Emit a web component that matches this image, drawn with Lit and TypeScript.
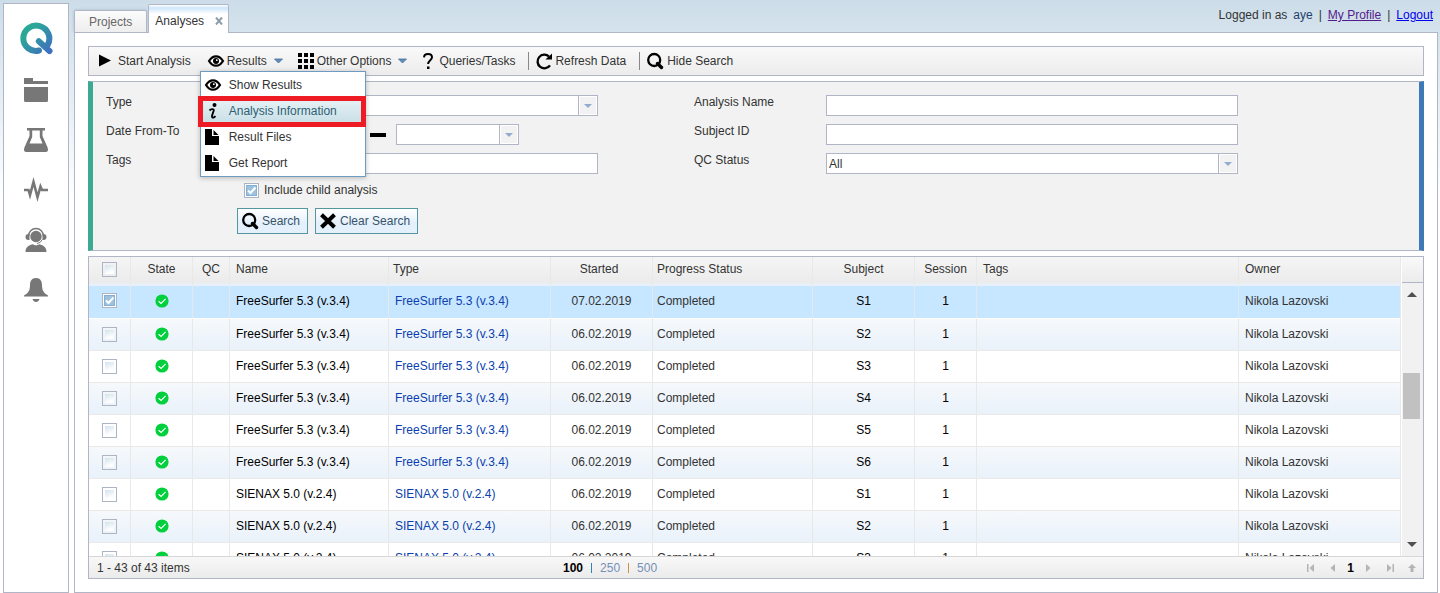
import { LitElement, html, svg, css } from "lit";
import { customElement, state } from "lit/decorators.js";
import { classMap } from "lit/directives/class-map.js";

const icon = (size: number, body: unknown, cls = "") =>
  html`<svg class="icon ${cls}" width=${size} height=${size} viewBox="0 0 ${size} ${size}" aria-hidden="true">${body}</svg>`;

const play = icon(16, svg`<path d="M1 1.500L13 7.500L1 13.500Z"/>`);
const eye = icon(
  16,
  svg`<path d="M1 8C3 4.800 5.300 3.300 8 3.300S13 4.800 15 8C13 11.200 10.700 12.700 8 12.700S3 11.200 1 8Z" fill="#fff" stroke="#000" stroke-width="2.200"/><circle cx="8" cy="8" r="3"/><circle cx="8.800" cy="7.200" r=".9" fill="#fff"/>`
);
const grid = icon(
  16,
  svg`<path d="M0 0h4v4H0zM6 0h4v4H6zM12 0h4v4h-4zM0 6h4v4H0zM6 6h4v4H6zM12 6h4v4h-4zM0 12h4v4H0zM6 12h4v4H6zM12 12h4v4h-4z"/>`
);
const question = icon(
  16,
  svg`<path d="M4 4.300C4.200 2.200 5.800 1 8 1C10.400 1 12 2.200 12 4.300C12 7.200 8.300 7.300 8.100 11" fill="none" stroke="#000" stroke-width="2"/><path d="M7 13.500h2.500v2.500H7z"/>`
);
const refresh = icon(
  16,
  svg`<path d="M13 3.500A6.800 6.800 0 1 0 14 12.300" fill="none" stroke="#000" stroke-width="2.300"/><path d="M16 .5V6.500H9.500L11.500 4.500L14 2.500Z"/>`
);
const search = icon(
  16,
  svg`<circle cx="7.200" cy="7" r="6" fill="none" stroke="#000" stroke-width="2.300"/><path d="M10.500 10.500L14.500 14.500" stroke="#000" stroke-width="3.400" stroke-linecap="round"/>`
);
const cross = icon(16, svg`<path d="M1.500 1.800L14.500 14.200M14.500 1.800L1.500 14.200" stroke="#000" stroke-width="4"/>`);
const info = icon(
  16,
  svg`<circle cx="9.500" cy="2" r="2"/><path d="M4.500 7.500C6 6 8.500 5.500 8.800 7C9 8.500 6.500 12 7 13.800C7.300 15.300 9.500 14.600 10.300 13" fill="none" stroke="#000" stroke-width="1.900"/>`
);
const file = icon(16, svg`<path d="M0 0H7V7H14V16H0Z"/><path d="M8.500 1L13.500 6H8.500Z"/>`);
const caret = html`<svg class="caret" width="11" height="6" viewBox="0 0 11 6" aria-hidden="true"><path d="M1.500 1H9.500L5.500 5Z" fill="#5b8fbd" stroke="#4c6c94" stroke-width=".8" /></svg>`;
const done = html`<svg class="done" width="14" height="14" viewBox="0 0 14 14" role="img" aria-label="Completed"><circle cx="7" cy="7" r="6.600" fill="#00d03c"/><path d="M3.600 7.200L6.100 9.500L10.600 4.800" fill="none" stroke="#fff" stroke-width="1.200"/></svg>`;

const nav = [
  { label: "Projects", body: svg`<path d="M0 0H9V3H24V6H0ZM0 9H24V22.500Q24 24 22.500 24H1.500Q0 24 0 22.500Z"/>` },
  {
    label: "Analyses",
    body: svg`<path fill-rule="evenodd" d="M3 0H21V2.500H18.500V8L23.600 19.500Q25 24 21.500 24H2.500Q-1 24 .4 19.500L5.500 8V2.500H3ZM8.200 2.500V9L5.500 15.500H18.500L15.800 9V2.500Z"/>`,
  },
  {
    label: "Activity",
    body: svg`<path d="M0 12H4.500L6 17L9.500 4L13.500 19L16.500 8.500L18 12H24" fill="none" stroke="#777" stroke-width="2.600"/>`,
  },
  {
    label: "Support",
    body: svg`<circle cx="12" cy="8.500" r="5.700"/><path d="M4.500 8A7.500 7.500 0 0 1 19.500 8" fill="none" stroke="#777" stroke-width="1.400"/><path d="M5.500 6H4.500A3 3 0 0 0 4.500 12H5.500ZM18.500 6H19.500A3 3 0 0 1 19.500 12H18.500Z"/><path d="M18.300 11.500Q17 15 13 15.500" fill="none" stroke="#777"/><path d="M1.500 24C1.500 19 4.500 17.300 8.500 16.200L12 17.500L15.500 16.200C19.500 17.300 22.500 19 22.500 24Z"/>`,
  },
  {
    label: "Notifications",
    body: svg`<path d="M12 0C7.500 0 6 3.500 6 7C6 13 4 15 0 17.500V18.500H24V17.500C20 15 18 13 18 7C18 3.500 16.500 0 12 0ZM8.500 21H15.500Q14.500 24 12 24T8.500 21Z"/>`,
  },
];

interface Analysis {
  name: string;
  started: string;
  subject: string;
}

const FS = "FreeSurfer 5.3 (v.3.4)";
const SX = "SIENAX 5.0 (v.2.4)";
const analyses: Analysis[] = [
  { name: FS, started: "07.02.2019", subject: "S1" },
  { name: FS, started: "06.02.2019", subject: "S2" },
  { name: FS, started: "06.02.2019", subject: "S3" },
  { name: FS, started: "06.02.2019", subject: "S4" },
  { name: FS, started: "06.02.2019", subject: "S5" },
  { name: FS, started: "06.02.2019", subject: "S6" },
  { name: SX, started: "06.02.2019", subject: "S1" },
  { name: SX, started: "06.02.2019", subject: "S2" },
  { name: SX, started: "06.02.2019", subject: "S3" },
];

const menu = [
  { label: "Show Results", icon: eye },
  { label: "Analysis Information", icon: info, active: true },
  { label: "Result Files", icon: file },
  { label: "Get Report", icon: file },
];

@customElement("app-root")
export class AppRoot extends LitElement {
  @state() private selected = new Set<number>([0]);

  static styles = css`
    :host {
      --line: #b1b6c6;
      display: flex;
      gap: 5px;
      box-sizing: border-box;
      height: 100vh;
      padding: 0 2px 0 3px;
      overflow: hidden;
      background: linear-gradient(#ccdde9, #ffffff 200px);
      color: #333;
      font: 12px/16px "Liberation Sans", Arial, sans-serif;
    }
    *, *::before, *::after { box-sizing: border-box; }
    button, input, select { font: inherit; color: inherit; margin: 0; }
    button { cursor: pointer; }
    .icon, .caret, .done { display: block; flex: none; overflow: visible; }

    .sidebar {
      flex: none;
      width: 66px;
      margin-top: 3px;
      padding-top: 18px;
      border: 1px solid var(--line);
      background: #fff;
      display: flex;
      flex-direction: column;
      align-items: center;
    }
    .logo { display: block; margin-bottom: 23px; }
    .nav { display: flex; flex-direction: column; gap: 26px; }
    .nav a { display: block; color: #777; }
    .nav svg { fill: #777; }

    .page { flex: 1; min-width: 0; display: flex; flex-direction: column; }
    .top { display: flex; justify-content: space-between; height: 32px; }
    .tabs { display: flex; gap: 1px; align-items: flex-end; }
    .tab {
      display: flex;
      align-items: center;
      height: 22px;
      padding: 0 14px;
      border: 1px solid var(--line);
      border-bottom: 0;
      border-radius: 2px 2px 0 0;
      background: linear-gradient(#fbfbfb, #eeeeee);
      color: #666;
      box-shadow: 0 0 3px rgba(80, 90, 110, 0.3);
    }
    .tab.current {
      z-index: 1;
      height: 29px;
      margin-bottom: -1px;
      padding: 4px 3px 0 6px;
      gap: 11px;
      background: linear-gradient(#ffffff, #cfe6fa 3px, #ffffff 9px);
      color: #333;
      box-shadow: none;
    }
    .close { width: 10px; height: 16px; padding: 0; border: 0; background: none; display: flex; align-items: center; }
    .account { display: flex; gap: 6px; padding: 7px 5px 0 0; }
    .account a { color: #0000ee; }
    .account a.seen { color: #551a8b; }
    .account b { font-weight: normal; color: #23406a; }

    .panel {
      flex: 1;
      min-height: 0;
      display: flex;
      flex-direction: column;
      gap: 5px;
      padding: 13px;
      border: 1px solid var(--line);
      background: #fff;
    }

    .toolbar {
      flex: none;
      display: flex;
      align-items: center;
      height: 30px;
      padding-left: 9px;
      border: 1px solid var(--line);
      background: linear-gradient(#f9f9f9, #ececec);
    }
    .tool { display: flex; align-items: center; gap: 3px; padding: 0; border: 0; background: none; white-space: nowrap; }
    .tool.first { gap: 4px; }
    .caret { margin-left: 3px; }
    .drop { position: relative; margin: 0 14px 0 17px; }
    .tail { margin-left: 12px; }
    .sep { width: 1px; height: 18px; margin: 0 7px 0 13px; background: #888; }

    .menu {
      position: absolute;
      z-index: 2;
      top: 18px;
      left: -8px;
      width: 166px;
      margin: 0;
      padding: 0;
      list-style: none;
      border: 1px solid #6f9bc0;
      background: #fff;
      box-shadow: 0 1px 5px rgba(0, 0, 0, 0.25);
    }
    .entry { position: relative; }
    .entry button {
      display: flex;
      align-items: center;
      gap: 8px;
      width: 100%;
      height: 26px;
      padding: 0 4px;
      border: 0;
      background: none;
      white-space: nowrap;
    }
    .entry.active button { background: linear-gradient(#e9f2f5, #c6dfe6); color: #2f5f75; }
    .entry.active::after {
      content: "";
      position: absolute;
      inset: -2px -1px -3px -3px;
      border: 5px solid #ed1c24;
      pointer-events: none;
    }

    .filter {
      flex: none;
      padding: 13px 181px 16px 13px;
      border: 1px solid var(--line);
      border-left: 5px solid #3ba993;
      border-right: 5px solid #3f79b8;
      background: #f2f2f2;
    }
    .fields {
      display: grid;
      grid-template-columns: 131px minmax(0, 361fr) 96px 132px minmax(0, 412fr);
      row-gap: 8px;
    }
    .fields label { height: 21px; line-height: 14px; }
    .fields .right { grid-column: 4; }
    .box {
      width: 100%;
      height: 21px;
      padding: 0 2px;
      border: 1px solid var(--line);
      border-radius: 0;
      background-color: #fff;
      outline: none;
      appearance: none;
    }
    .combo {
      background-repeat: no-repeat;
      background-position: right center;
      background-image: url("data:image/svg+xml,%3Csvg xmlns='http://www.w3.org/2000/svg' width='19' height='19'%3E%3Cpath d='M0 0h1v19H0z' fill='%23b1b6c6'/%3E%3Cpath d='M1 0h18v19H1z' fill='%23fff'/%3E%3Cpath d='M2 1h16v17H2z' fill='%23f2f2f2'/%3E%3Cpath d='M6 8h8l-4 4z' fill='%2394abd0'/%3E%3C/svg%3E");
    }
    .range { display: flex; align-items: center; gap: 10px; }
    .range .box { width: 123px; }
    .dash { width: 16px; height: 4px; background: #000; }
    .child { display: flex; align-items: center; gap: 5px; padding: 8px 0 0 138px; }
    .actions { display: flex; gap: 7px; padding: 10px 0 0 131px; }
    .action {
      display: flex;
      align-items: center;
      gap: 4px;
      height: 26px;
      padding: 0 7px 0 4px;
      border: 1px solid #5596a3;
      background: linear-gradient(#ffffff, #e4f0fb 60%);
      color: #36536a;
    }

    .check {
      display: block;
      flex: none;
      width: 15px;
      height: 15px;
      border: 1px solid #adb4c4;
      appearance: none;
      background: linear-gradient(160deg, #d3e2ec, #ffffff 80%) content-box #fff;
      padding: 2px;
    }
    .check:checked {
      background: url("data:image/svg+xml,%3Csvg xmlns='http://www.w3.org/2000/svg' width='11' height='11'%3E%3Cpath d='M0 0h11v11H0z' fill='%2384b0d3'/%3E%3Cpath d='M1 1h9v9H1z' fill='%239cc2df'/%3E%3Cpath d='M2 5.500l2.500 2.500L9.500 2.500' fill='none' stroke='%23fff' stroke-width='2'/%3E%3C/svg%3E") center no-repeat #fff;
    }

    .list { flex: 1; min-height: 0; display: flex; flex-direction: column; border: 1px solid var(--line); }
    .view { flex: 1; min-height: 0; display: flex; }
    .scroller { flex: 1; min-width: 0; overflow: hidden; }
    .data { width: 100%; table-layout: fixed; border-collapse: separate; border-spacing: 0; }
    .pick { width: 42px; }
    .st { width: 62px; }
    .qc { width: 37px; }
    .nm { width: 159px; }
    .ty { width: 162px; }
    .dt { width: 102px; }
    .pr { width: 160px; }
    .sb { width: 102px; }
    .ow { width: 162px; }
    th, td { padding: 0 6px; border-right: 1px solid #e8e8e8; text-align: left; font-weight: normal; white-space: nowrap; overflow: hidden; }
    .data th { height: 29px; padding-bottom: 5px; background: linear-gradient(#f5f5f5, #ebebeb 26px, #e8eff8 26px); }
    .data td { height: 32px; padding-bottom: 1px; border-bottom: 1px solid #e9e9e9; background: #fff; }
    .data tr:nth-child(even) td { background: linear-gradient(#f6f9fc, #e9f1fa); }
    .data tr.on td { height: 33px; padding-bottom: 3px; background: #c7e6ff; border-bottom-color: #fff; }
    .data .mid { text-align: center; }
    .data th.early { padding-right: 11px; }
    .data .snug { padding-left: 4px; }
    .data .strong { color: #000; }
    .data th .check, .data td .check, .data .done { margin: 0 auto; }
    .data a { color: #0b3fae; text-decoration: none; }
    .bar { flex: none; width: 22px; display: flex; flex-direction: column; background: #f1f1f1; border-left: 1px solid #fff; }
    .barhead { height: 26px; background: linear-gradient(#f9f9f9, #ececec); border-bottom: 1px solid var(--line); }
    .track { flex: 1; display: flex; flex-direction: column; align-items: center; padding: 9px 2px 9px 0; }
    .before { flex: 76; }
    .thumb { flex: 46; width: 17px; background: #c1c1c1; }
    .after { flex: 123; }
    .arrow { width: 0; border: 5px solid transparent; border-top-width: 0; border-bottom-color: #505050; }
    .arrow.down { border-width: 5px 5px 0; border-top-color: #505050; }

    .foot {
      flex: none;
      display: grid;
      grid-template-columns: 474px 1fr auto;
      align-items: center;
      height: 22px;
      border-top: 1px solid #d6d6d6;
      background: linear-gradient(#f8f8f8, #ebebeb);
    }
    .count { padding-left: 8px; }
    .sizes { display: flex; gap: 8px; align-items: center; color: #000; }
    .sizes a { color: #7690b8; text-decoration: none; }
    .mark { width: 1px; height: 10px; background: #2f86ad; }
    .mark.warm { background: #cf9142; }
    .pager { display: flex; align-items: center; gap: 14px; padding-right: 7px; }
    .pager button { display: flex; padding: 0; border: 0; background: none; }
    .pager svg { display: block; fill: #b4b4b4; }
    .pager b { margin: 0 -4px; color: #000; }
  `;

  private toggle(i: number) {
    const next = new Set(this.selected);
    next.has(i) ? next.delete(i) : next.add(i);
    this.selected = next;
  }

  private row(a: Analysis, i: number) {
    const on = this.selected.has(i);
    return html`<tr class=${classMap({ on })}>
      <td><input class="check" type="checkbox" aria-label="Select ${a.name} ${a.subject}" .checked=${on} @change=${() => this.toggle(i)} /></td>
      <td>${done}</td>
      <td></td>
      <td class="strong">${a.name}</td>
      <td><a href="#">${a.name}</a></td>
      <td class="mid">${a.started}</td>
      <td class="snug">Completed</td>
      <td class="mid strong">${a.subject}</td>
      <td class="mid strong">1</td>
      <td></td>
      <td>Nikola Lazovski</td>
    </tr>`;
  }

  private pageButton(label: string, d: string) {
    return html`<button type="button" aria-label=${label}><svg width="8" height="8" viewBox="0 0 8 8"><path d=${d} /></svg></button>`;
  }

  render() {
    return html`
      <aside class="sidebar">
        <svg class="logo" width="33" height="33" viewBox="0 0 33 33" role="img" aria-label="Q">
          <defs><linearGradient id="q" x1="0" y1="0" x2="1" y2="1"><stop offset=".25" stop-color="#2ba798" /><stop offset="1" stop-color="#3f6fc0" /></linearGradient></defs>
          <path d="M19 28.500C11 30.500 3.300 24.500 3.300 16.500A13 13 0 1 1 27.500 23.200M18.800 19.300L29.500 29" fill="none" stroke="url(#q)" stroke-width="6" stroke-linecap="round" stroke-linejoin="round" />
        </svg>
        <nav class="nav">
          ${nav.map((n) => html`<a href="#" aria-label=${n.label}>${icon(24, n.body)}</a>`)}
        </nav>
      </aside>

      <main class="page">
        <header class="top">
          <div class="tabs">
            <button class="tab" type="button">Projects</button>
            <div class="tab current">
              <span>Analyses</span>
              <button class="close" type="button" aria-label="Close tab">
                <svg width="8" height="8" viewBox="0 0 8 8"><path d="M1 .5L7 7.500M7 .5L1 7.500" stroke="#8f9dab" stroke-width="2" /></svg>
              </button>
            </div>
          </div>
          <div class="account">
            <span>Logged in as</span><b>aye</b><span>|</span><a class="seen" href="#">My Profile</a><span>|</span><a href="#">Logout</a>
          </div>
        </header>

        <section class="panel">
          <div class="toolbar">
            <button class="tool first" type="button">${play}Start Analysis</button>
            <div class="drop">
              <button class="tool" type="button">${eye}Results ${caret}</button>
              <ul class="menu">
                ${menu.map((m) => html`<li class=${classMap({ entry: true, active: !!m.active })}><button type="button">${m.icon}${m.label}</button></li>`)}
              </ul>
            </div>
            <button class="tool" type="button">${grid}Other Options ${caret}</button>
            <button class="tool tail" type="button">${question}Queries/Tasks</button>
            <span class="sep"></span>
            <button class="tool" type="button">${refresh}Refresh Data</button>
            <span class="sep"></span>
            <button class="tool first" type="button">${search}Hide Search</button>
          </div>

          <form class="filter" @submit=${(e: Event) => e.preventDefault()}>
            <div class="fields">
              <label for="type">Type</label>
              <select id="type" class="box combo"><option></option></select>
              <label class="right" for="name">Analysis Name</label>
              <input id="name" class="box" type="text" />
              <label for="from">Date From-To</label>
              <div class="range">
                <input id="from" class="box combo" type="text" />
                <span class="dash"></span>
                <input class="box combo" type="text" aria-label="Date to" />
              </div>
              <label class="right" for="subject">Subject ID</label>
              <input id="subject" class="box" type="text" />
              <label for="tags">Tags</label>
              <input id="tags" class="box" type="text" />
              <label class="right" for="qc">QC Status</label>
              <select id="qc" class="box combo"><option>All</option></select>
            </div>
            <div class="child">
              <input id="child" class="check" type="checkbox" checked />
              <label for="child">Include child analysis</label>
            </div>
            <div class="actions">
              <button class="action" type="submit">${search}Search</button>
              <button class="action" type="reset">${cross}Clear Search</button>
            </div>
          </form>

          <section class="list">
            <div class="view">
              <div class="scroller">
                <table class="data">
                  <colgroup>
                    <col class="pick" /><col class="st" /><col class="qc" /><col class="nm" /><col class="ty" /><col class="dt" /><col class="pr" /><col class="sb" /><col class="st" /><col /><col class="ow" />
                  </colgroup>
                  <thead>
                    <tr>
                      <th><input class="check" type="checkbox" aria-label="Select all" /></th>
                      <th class="mid">State</th>
                      <th class="mid">QC</th>
                      <th>Name</th>
                      <th class="snug">Type</th>
                      <th class="mid early">Started</th>
                      <th class="snug">Progress Status</th>
                      <th class="mid">Subject</th>
                      <th class="mid">Session</th>
                      <th>Tags</th>
                      <th>Owner</th>
                    </tr>
                  </thead>
                  <tbody>
                    ${analyses.map((a, i) => this.row(a, i))}
                  </tbody>
                </table>
              </div>
              <div class="bar" aria-hidden="true">
                <div class="barhead"></div>
                <div class="track">
                  <span class="arrow"></span><span class="before"></span><span class="thumb"></span><span class="after"></span><span class="arrow down"></span>
                </div>
              </div>
            </div>
            <footer class="foot">
              <span class="count">1 - 43 of 43 items</span>
              <div class="sizes"><b>100</b><span class="mark"></span><a href="#">250</a><span class="mark warm"></span><a href="#">500</a></div>
              <div class="pager">
                ${this.pageButton("First page", "M0 0H1.500V8H0ZM7 0V8L2.500 4Z")}
                ${this.pageButton("Previous page", "M6 0V8L1.500 4Z")}
                <b>1</b>
                ${this.pageButton("Next page", "M2 0V8L6.500 4Z")}
                ${this.pageButton("Last page", "M1 0V8L5.500 4ZM6.500 0H8V8H6.500Z")}
                ${this.pageButton("Back to top", "M4 0L8 4H5.500V8H2.500V4H0Z")}
              </div>
            </footer>
          </section>
        </section>
      </main>
    `;
  }
}
